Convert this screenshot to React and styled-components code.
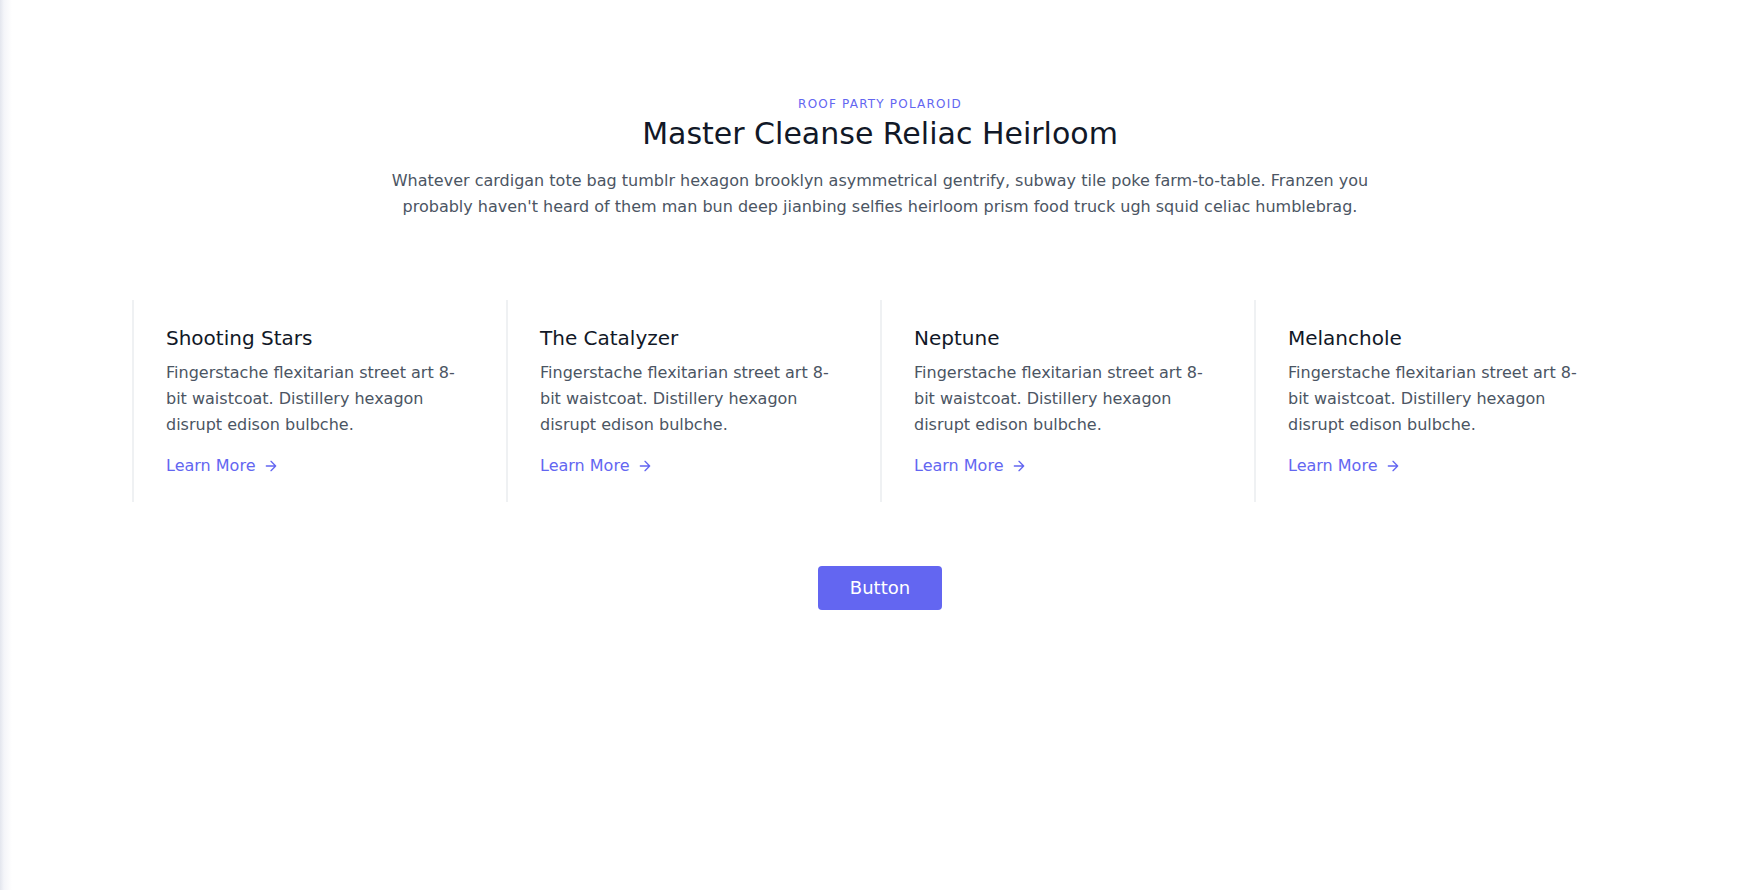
import React from 'react';
import styled, { createGlobalStyle } from 'styled-components';

const features = [
  'Shooting Stars',
  'The Catalyzer',
  'Neptune',
  'Melanchole',
];

const App = () => {
  return (
    <>
      <GlobalStyle />
      <Section>
        <Container>
          <Header>
            <Eyebrow>ROOF PARTY POLAROID</Eyebrow>
            <Title>Master Cleanse Reliac Heirloom</Title>
            <Lead>
              Whatever cardigan tote bag tumblr hexagon brooklyn asymmetrical gentrify, subway tile poke
              farm-to-table. Franzen you probably haven't heard of them man bun deep jianbing selfies
              heirloom prism food truck ugh squid celiac humblebrag.
            </Lead>
          </Header>

          <Features>
            {features.map((name) => (
              <Feature key={name}>
                <FeatureTitle>{name}</FeatureTitle>
                <FeatureText>
                  Fingerstache flexitarian street art 8-bit waistcoat. Distillery hexagon disrupt edison
                  bulbche.
                </FeatureText>
                <LearnMore href="#">
                  Learn More
                  <svg
                    fill="none"
                    stroke="currentColor"
                    strokeLinecap="round"
                    strokeLinejoin="round"
                    strokeWidth="2"
                    viewBox="0 0 24 24"
                  >
                    <path d="M5 12h14M12 5l7 7-7 7" />
                  </svg>
                </LearnMore>
              </Feature>
            ))}
          </Features>

          <Button>Button</Button>
        </Container>
      </Section>
    </>
  );
};

export default App;

const GlobalStyle = createGlobalStyle`
  *, *::before, *::after {
    box-sizing: border-box;
  }

  html, body {
    margin: 0;
    min-height: 100%;
  }

  body {
    min-height: 100vh;
    font-family: "DejaVu Sans", Verdana, sans-serif;
    background: linear-gradient(to right, #e3e6ee 0px, #f4f5f9 4px, #fff 12px);
  }
`;

const Section = styled.section`
  color: #4b5563;
`;

const Container = styled.div`
  max-width: 1536px;
  margin: 0 auto;
  padding: 96px 20px;
`;

const Header = styled.div`
  display: flex;
  flex-direction: column;
  text-align: center;
  width: 100%;
  margin-bottom: 80px;
`;

const Eyebrow = styled.h2`
  margin: 0 0 4px;
  font-size: 12px;
  line-height: 16px;
  letter-spacing: 0.1em;
  font-weight: 500;
  color: #6366f1;
`;

const Title = styled.h1`
  margin: 0 0 16px;
  font-size: 30px;
  line-height: 36px;
  font-weight: 500;
  color: #111827;
`;

const Lead = styled.p`
  margin: 0 auto;
  width: 66.666667%;
  font-size: 16px;
  line-height: 1.625;
`;

const Features = styled.div`
  display: flex;
  flex-wrap: wrap;
`;

const Feature = styled.div`
  width: 25%;
  padding: 24px 32px;
  border-left: 2px solid rgba(229, 231, 235, 0.6);
`;

const FeatureTitle = styled.h2`
  margin: 0 0 8px;
  font-size: 20px;
  line-height: 28px;
  font-weight: 500;
  color: #111827;
`;

const FeatureText = styled.p`
  margin: 0 0 16px;
  font-size: 16px;
  line-height: 1.625;
`;

const LearnMore = styled.a`
  display: inline-flex;
  align-items: center;
  color: #6366f1;
  text-decoration: none;
  font-size: 16px;
  line-height: 24px;

  svg {
    width: 16px;
    height: 16px;
    margin-left: 8px;
  }
`;

const Button = styled.button`
  display: flex;
  margin: 64px auto 0;
  padding: 8px 32px;
  border: 0;
  border-radius: 4px;
  background: #6366f1;
  color: #fff;
  font-family: inherit;
  font-size: 18px;
  line-height: 28px;
  cursor: pointer;

  &:hover {
    background: #4f46e5;
  }
`;
